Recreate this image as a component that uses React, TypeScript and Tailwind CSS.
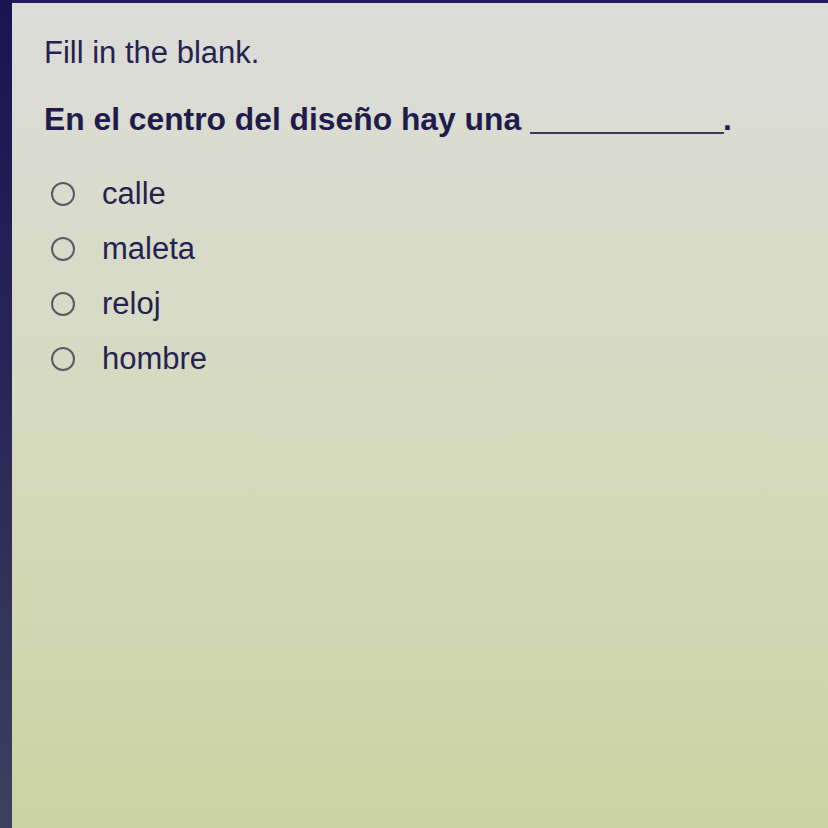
import React from "react";

const options = ["calle", "maleta", "reloj", "hombre"];

export default function App() {
  return (
    <div
      className="flex h-[828px] w-[828px] overflow-hidden"
      style={{ fontFamily: '"Liberation Sans", Arial, sans-serif' }}
    >
      <div className="w-[12px] shrink-0 bg-gradient-to-b from-[#1a1450] via-[#2a2756] to-[#3d4060]" />
      <div className="flex-1 border-t-[3px] border-[#221c5e] bg-gradient-to-b from-[#dcdcd9] via-[#d6dabf] to-[#cbd3a2] pl-[32px] pt-[32px] text-[#1f1c4c]">
        <div className="text-[31px] leading-[36px] text-[#25224f]">Fill in the blank.</div>
        <div className="mt-[30px] flex items-baseline text-[31.8px] font-bold leading-[36px]">
          <span>En el centro del diseño hay una</span>
          <span className="ml-[9px] inline-block w-[194px] border-b-[2px] border-[#3a3858] translate-y-[4px]" />
          <span className="-ml-[1px]">.</span>
        </div>
        <div className="mt-[39px] flex flex-col gap-[19px] pl-[7px]">
          {options.map((o) => (
            <div key={o} className="flex items-center">
              <span className="h-[24px] w-[24px] rounded-full border-[2px] border-[#5a5a66]" />
              <span className="ml-[27px] text-[31px] leading-[36px] text-[#25224f]">{o}</span>
            </div>
          ))}
        </div>
      </div>
    </div>
  );
}
